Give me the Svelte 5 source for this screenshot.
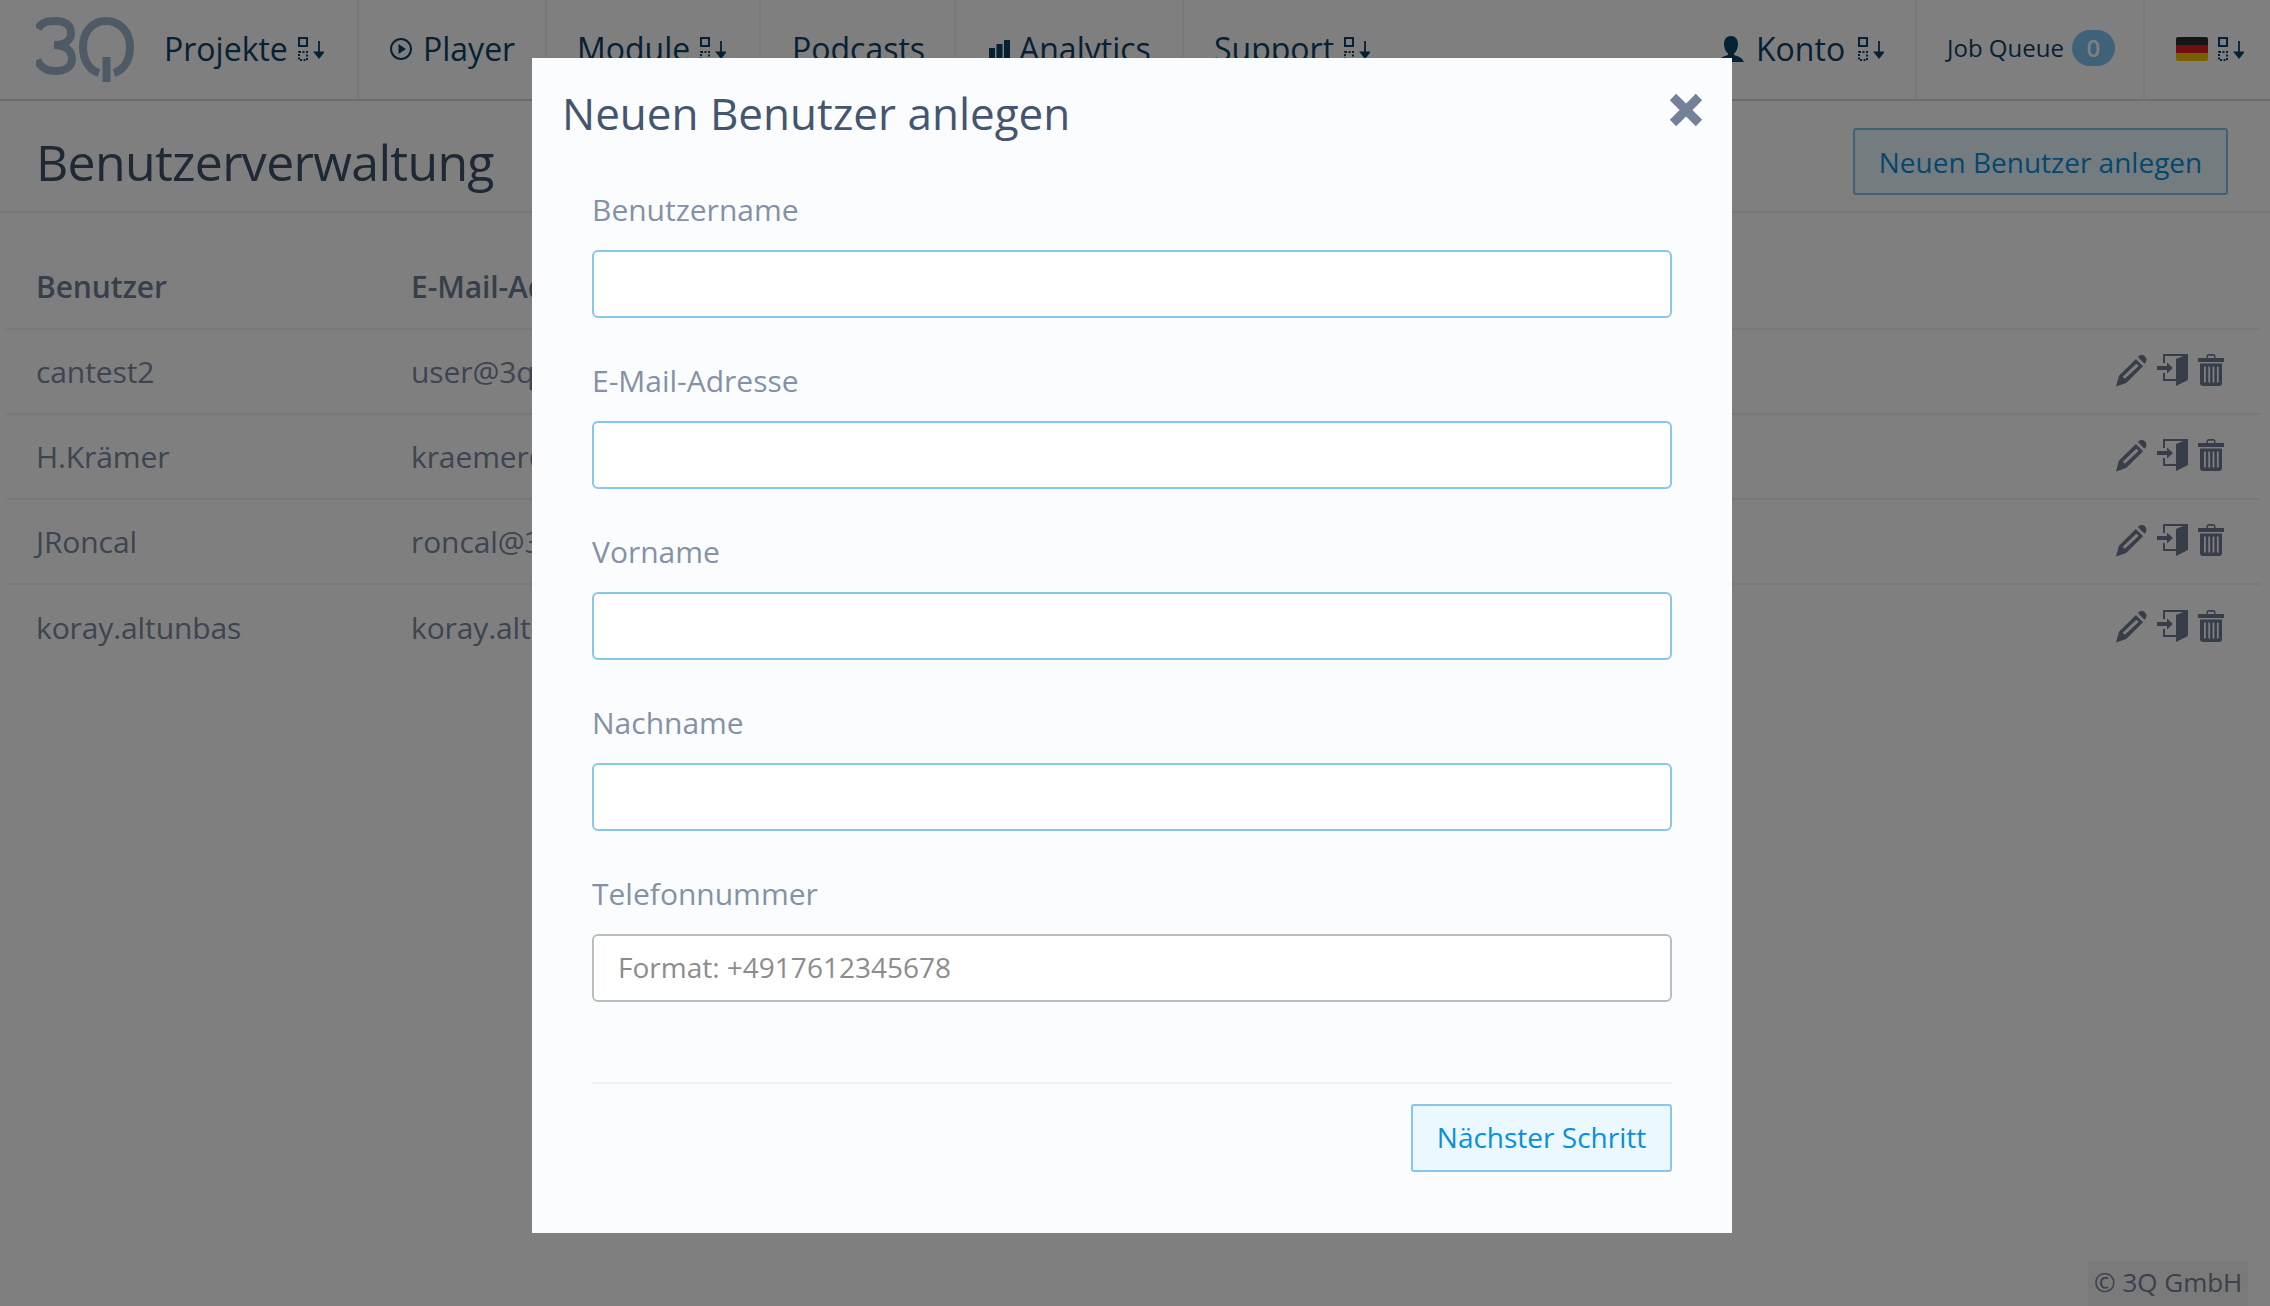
<script>
	const users = [
		{ name: 'cantest2', mail: 'user@3qsdn.com' },
		{ name: 'H.Krämer', mail: 'kraemer@3qsdn.com' },
		{ name: 'JRoncal', mail: 'roncal@3qsdn.com' },
		{ name: 'koray.altunbas', mail: 'koray.altunbas@3qsdn.com' }
	];
	const fields = [
		{ label: 'Benutzername', placeholder: '', required: true },
		{ label: 'E-Mail-Adresse', placeholder: '', required: true },
		{ label: 'Vorname', placeholder: '', required: true },
		{ label: 'Nachname', placeholder: '', required: true },
		{ label: 'Telefonnummer', placeholder: 'Format: +4917612345678', required: false }
	];
</script>

{#snippet sort()}
	<svg class="sort" viewBox="0 0 26 24" width="26" height="24">
		<rect x="1" y="1" width="8" height="8" fill="none" stroke="currentColor" stroke-width="2" />
		<rect x="1" y="15" width="8" height="8" fill="none" stroke="currentColor" stroke-width="2" stroke-dasharray="2 1.500" />
		<path d="M21 4v16M17 15.500l4 5 4-5z" fill="currentColor" stroke="currentColor" stroke-width="1.800" />
	</svg>
{/snippet}

<div class="page">
	<header class="nav">
		<div class="logo">
			<svg viewBox="0 0 100 66" width="100" height="66">
				<g fill="none" stroke="#9cb4cc" stroke-width="8">
					<path d="M2 12C6 4 13 4 20 4c10 0 15 5 15 12S29 28 18 28c12 0 18 6 18 14S29 54 19 54C10 54 5 51 1 43" />
					<path d="M63 56C53 53 47 43 47 30 47 14 57 4 70 4S94 14 94 30C94 43 88 53 78 56" />
				</g>
				<rect x="66.500" y="40" width="8" height="25" fill="#9cb4cc" />
			</svg>
		</div>
		<a class="item first">Projekte {@render sort()}</a>
		<a class="item player">
			<svg viewBox="0 0 24 24" width="24" height="24" class="ico"><circle cx="12" cy="12" r="10" fill="none" stroke="currentColor" stroke-width="2" /><path d="M9.500 7l7.500 5-7.500 5z" fill="currentColor" /></svg>
			Player
		</a>
		<a class="item module">Module {@render sort()}</a>
		<a class="item podcasts">Podcasts</a>
		<a class="item analytics">
			<svg viewBox="0 0 22 18" width="22" height="18" class="ico"><path d="M0 8h6v10H0zM7.500 4h6v14h-6zM15 0h6v18h-6z" fill="currentColor" /></svg>
			Analytics
		</a>
		<a class="item support">Support {@render sort()}</a>
		<div class="spacer"></div>
		<a class="item konto">
			<svg viewBox="0 0 28 28" width="28" height="28" class="ico"><path d="M14 1c4.500 0 7 3.500 7 8s-2 8-4 9.500v1.500c4 1 8 2.500 10 7H1c2-4.500 6-6 10-7v-1.500C9 17 7 13.500 7 9s2.500-8 7-8z" fill="currentColor" /></svg>
			Konto {@render sort()}
		</a>
		<a class="item queue">Job Queue <span class="badge">0</span></a>
		<a class="item lang">
			<span class="flag"><i></i><i></i><i></i></span>
			{@render sort()}
		</a>
	</header>

	<div class="title-bar">
		<h1>Benutzerverwaltung</h1>
		<button class="outline">Neuen Benutzer anlegen</button>
	</div>

	<div class="table">
		<div class="row head">
			<div class="col-name">Benutzer</div>
			<div>E-Mail-Adresse</div>
		</div>
		{#each users as user}
			<div class="row">
				<div class="col-name">{user.name}</div>
				<div class="col-mail">{user.mail}</div>
				<div class="actions">
					<svg viewBox="0 0 32 33" width="31" height="33"><path d="M0 33l3-11L20.500 4.500l7.500 7.500L10.500 29.500zM7 23l2 2L23.500 11.500 21 9.500z" fill="currentColor" fill-rule="evenodd" /><path d="M22.500 2.500c2.500-2.500 5.500-2.500 7.500-.5s2 5-.5 7.500z" fill="currentColor" /></svg>
					<svg viewBox="0 0 31 32" width="31" height="32"><path d="M19 5L31 0v26L19 32zM6 0h25v2H8v7H6zM6 19h2v6h11v2H6zM0 12h10V8.500l6 5.500-6 5.500V16H0z" fill="currentColor" /></svg>
					<svg viewBox="0 0 26 32" width="26" height="32"><path d="M0 4h8.500V2c0-1 1-2 2-2h5c1 0 2 1 2 2v2H26v4H0zM10 4h6V1.800h-6zM2 9.500h22V29c0 2-1 3-3 3H5c-2 0-3-1-3-3zM6 12.500v16h1.800v-16zM10.300 12.500v16h1.800v-16zM14.600 12.500v16h1.800v-16zM18.900 12.500v16h1.800v-16z" fill="currentColor" fill-rule="evenodd" /></svg>
				</div>
			</div>
		{/each}
	</div>

	<div class="copyright">© 3Q GmbH</div>
</div>

<div class="overlay"></div>

<div class="modal">
	<div class="modal-head">
		<h2>Neuen Benutzer anlegen</h2>
		<svg class="close" viewBox="0 0 34 34" width="34" height="34"><path d="M4 4l26 26M30 4L4 30" stroke="currentColor" stroke-width="9" /></svg>
	</div>
	<form class="modal-body">
		{#each fields as field}
			<label class="field">
				<span>{field.label}</span>
				<input class:required={field.required} placeholder={field.placeholder} />
			</label>
		{/each}
		<div class="modal-foot">
			<button type="button" class="next">Nächster Schritt</button>
		</div>
	</form>
</div>

<style>
	:global(body) {
		background: #fff;
		font-family: "Open Sans", sans-serif;
		overflow: hidden;
	}
	.page {
		height: 1306px;
		position: relative;
		overflow: hidden;
	}
	.nav {
		display: flex;
		height: 99px;
		border-bottom: 2px solid #d5dbe1;
		box-sizing: content-box;
		color: #0a4268;
		font-size: 32px;
	}
	.logo {
		width: 128px;
		padding: 17px 0 0 36px;
		box-sizing: content-box;
	}
	.spacer {
		flex: 1;
	}
	.item {
		display: flex;
		align-items: center;
		gap: 8px;
		padding-bottom: 2px;
		border-right: 2px solid #f0f2f4;
		box-sizing: border-box;
		white-space: nowrap;
	}
	.first { width: 195px; }
	.player { width: 188px; padding-left: 30px; gap: 10px; }
	.module { width: 214px; padding-left: 30px; }
	.podcasts { width: 195px; padding-left: 31px; }
	.analytics { width: 228px; padding-left: 33px; }
	.support { padding-left: 30px; border-right: 0; }
	.konto { padding-right: 30px; width: 200px; gap: 11px; }
	.queue { width: 228px; padding-left: 30px; padding-bottom: 4px; font-size: 24px; }
	.lang { width: 125px; padding-left: 31px; border-right: 0; gap: 8px; }
	.sort {
		margin-left: 2px;
		flex: none;
	}
	.ico {
		flex: none;
	}
	.badge {
		display: inline-flex;
		align-items: center;
		justify-content: center;
		width: 43px;
		height: 36px;
		border-radius: 18px;
		background: #7cc4f0;
		color: #fff;
		font-size: 24px;
		font-weight: 600;
	}
	.flag {
		display: flex;
		flex-direction: column;
		width: 32px;
		height: 24px;
		border-radius: 2px;
		overflow: hidden;
	}
	.flag i {
		flex: 1;
		display: block;
	}
	.flag i:nth-child(1) { background: #2a2a2a; }
	.flag i:nth-child(2) { background: #e02020; }
	.flag i:nth-child(3) { background: #f0c000; }
	.title-bar {
		display: flex;
		align-items: center;
		justify-content: space-between;
		height: 112px;
		padding: 11px 42px 0 36px;
		border-bottom: 2px solid #eef1f4;
		box-sizing: border-box;
	}
	h1 {
		margin: 0;
		font-size: 50px;
		font-weight: 400;
		letter-spacing: -0.7px;
		color: #3f526c;
	}
	.outline {
		width: 375px;
		height: 67px;
		padding: 0;
		border: 2px solid #7cc4e8;
		border-radius: 3px;
		background: #ebf8ff;
		color: #0a8fdc;
		font: 400 28px "Open Sans", sans-serif;
		box-sizing: border-box;
	}
	.table {
		margin: 0 10px 0 6px;
		font-size: 30px;
		letter-spacing: -0.1px;
		color: #7a8aa0;
	}
	.row {
		display: flex;
		align-items: center;
		height: 85px;
		padding-left: 30px;
		border-bottom: 2px solid #eef1f4;
		box-sizing: border-box;
		position: relative;
	}
	.row:last-child {
		border-bottom: 0;
	}
	.head {
		height: 117px;
		padding-top: 32px;
		font-weight: 600;
		color: #6e7f96;
	}
	.col-name {
		width: 375px;
	}
	.actions {
		margin-left: auto;
		margin-right: 36px;
		margin-bottom: 3px;
		display: flex;
		align-items: center;
		gap: 10px;
		color: #6f7d92;
	}
	.copyright {
		position: absolute;
		right: 22px;
		bottom: 0;
		width: 160px;
		height: 45px;
		box-sizing: border-box;
		padding: 3px 0 0 6px;
		background: #f4f4f4;
		color: #72829a;
		font-size: 26px;
		white-space: nowrap;
	}
	.overlay {
		position: fixed;
		inset: 0;
		background: rgba(0, 0, 0, 0.5);
	}
	.modal {
		position: fixed;
		left: 532px;
		top: 58px;
		width: 1200px;
		height: 1175px;
		background: #fbfcfe;
		box-sizing: border-box;
	}
	.modal-head {
		display: flex;
		justify-content: space-between;
		padding: 27px 29px 0 30px;
		height: 110px;
		box-sizing: border-box;
	}
	h2 {
		margin: 0;
		font-size: 44px;
		font-weight: 400;
		line-height: 56px;
		color: #44566f;
	}
	.close {
		margin-top: 8px;
		color: #748198;
	}
	.modal-body {
		padding: 0 60px;
	}
	.field {
		display: block;
		height: 171px;
		padding-top: 22px;
		box-sizing: border-box;
		font-size: 30px;
		color: #8492a6;
	}
	.field span {
		display: block;
		height: 60px;
		line-height: 40px;
	}
	input {
		display: block;
		width: 100%;
		height: 68px;
		padding: 0 24px 3px;
		border: 2px solid #b8bdc6;
		border-radius: 6px;
		background: #fff;
		font: 400 28px "Open Sans", sans-serif;
		color: #44566f;
		box-sizing: border-box;
		outline: none;
	}
	input.required {
		border-color: #86c8ea;
	}
	input::placeholder {
		color: #8c8c8c;
		opacity: 1;
	}
	.modal-foot {
		display: flex;
		justify-content: flex-end;
		margin-top: 59px;
		padding-top: 20px;
		border-top: 2px solid #eff1f2;
	}
	.next {
		width: 261px;
		height: 68px;
		padding: 0 0 2px;
		border: 2px solid #86c8ea;
		border-radius: 3px;
		background: #ebf8ff;
		color: #0a8fdc;
		font: 400 28px "Open Sans", sans-serif;
		box-sizing: border-box;
	}
</style>
